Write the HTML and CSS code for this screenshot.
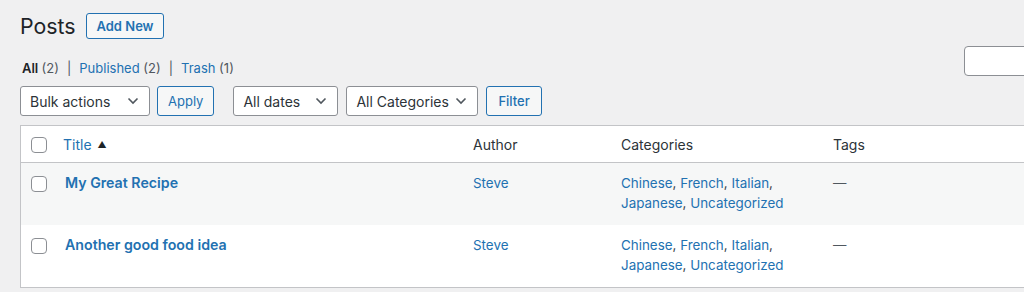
FILE: index.html
```html
<!DOCTYPE html>
<html lang="en">
<head>
    <meta charset="UTF-8">
    <title>Posts</title>
    <link rel="stylesheet" href="styles.css">
</head>
<body>
    <div class="wrap">
        <div class="page-head">
            <h1>Posts</h1>
            <a class="btn add-new" href="#">Add New</a>
        </div>

        <div class="status-row">
            <ul class="subsubsub">
                <li><a class="current" href="#">All <span class="count">(2)</span></a><span class="sep">|</span></li>
                <li><a href="#">Published <span class="count">(2)</span></a><span class="sep">|</span></li>
                <li><a href="#">Trash <span class="count">(1)</span></a></li>
            </ul>
            <div class="search-box"></div>
        </div>

        <div class="tablenav">
            <div class="select bulk">
                <span>Bulk actions</span>
                <svg width="12" height="8" viewBox="0 0 12 8"><path d="M1.5 1.5 6 6l4.5-4.5" fill="none" stroke="#50575e" stroke-width="1.6"/></svg>
            </div>
            <a class="btn" href="#">Apply</a>
            <div class="select dates">
                <span>All dates</span>
                <svg width="12" height="8" viewBox="0 0 12 8"><path d="M1.5 1.5 6 6l4.5-4.5" fill="none" stroke="#50575e" stroke-width="1.6"/></svg>
            </div>
            <div class="select cats">
                <span>All Categories</span>
                <svg width="12" height="8" viewBox="0 0 12 8"><path d="M1.5 1.5 6 6l4.5-4.5" fill="none" stroke="#50575e" stroke-width="1.6"/></svg>
            </div>
            <a class="btn filter" href="#">Filter</a>
        </div>

        <table class="posts">
            <thead>
                <tr>
                    <th class="check"><span class="checkbox"></span></th>
                    <th class="col-title"><a href="#">Title</a> <span class="sort">&#9650;</span></th>
                    <th class="col-author">Author</th>
                    <th class="col-cats">Categories</th>
                    <th class="col-tags">Tags</th>
                    <th class="col-rest"></th>
                </tr>
            </thead>
            <tbody>
                <tr class="alt">
                    <td class="check"><span class="checkbox"></span></td>
                    <td class="col-title"><a class="row-title" href="#">My Great Recipe</a></td>
                    <td><a href="#">Steve</a></td>
                    <td><a href="#">Chinese</a>, <a href="#">French</a>, <a href="#">Italian</a>,<br><a href="#">Japanese</a>, <a href="#">Uncategorized</a></td>
                    <td class="dash">&mdash;</td>
                    <td></td>
                </tr>
                <tr>
                    <td class="check"><span class="checkbox"></span></td>
                    <td class="col-title"><a class="row-title" href="#">Another good food idea</a></td>
                    <td><a href="#">Steve</a></td>
                    <td><a href="#">Chinese</a>, <a href="#">French</a>, <a href="#">Italian</a>,<br><a href="#">Japanese</a>, <a href="#">Uncategorized</a></td>
                    <td class="dash">&mdash;</td>
                    <td></td>
                </tr>
            </tbody>
        </table>
    </div>
</body>
</html>
```

FILE: styles.css
```css
body {
    margin: 0;
    background-color: #f0f0f1;
    color: #3c434a;
    font-family: Inter, 'Liberation Sans', sans-serif;
    font-size: 13px;
    overflow: hidden;
}
a {
    color: #2271b1;
    text-decoration: none;
}
.wrap {
    width: 1124px;
    padding-left: 20px;
}
.page-head {
    display: flex;
    align-items: center;
    gap: 10px;
    height: 26px;
    margin-top: 13px;
}
h1 {
    margin: 0;
    font-size: 21.3px;
    font-weight: 400;
    color: #1d2327;
}
.btn {
    display: inline-flex;
    align-items: center;
    box-sizing: border-box;
    height: 30px;
    padding: 0 10px;
    border: 1px solid #2271b1;
    border-radius: 3px;
    background-color: #f6f7f7;
    color: #2271b1;
    font-size: 13px;
}
.add-new {
    height: 26px;
    padding: 0 9px 0 10px;
    font-weight: 600;
}
.filter {
    padding: 0 11px;
    font-weight: 500;
}
.status-row {
    display: flex;
    justify-content: space-between;
    align-items: flex-start;
    margin-top: 7px;
}
.subsubsub {
    display: flex;
    list-style: none;
    margin: 13px 0 0 2px;
    padding: 0;
    line-height: 18px;
    color: #50575e;
}
.subsubsub .current {
    color: #1d2327;
    font-weight: 600;
}
.sep {
    padding: 0 8px;
    color: #50575e;
}
.count {
    color: #50575e;
    font-weight: 400;
}
.search-box {
    width: 180px;
    height: 30px;
    box-sizing: border-box;
    border: 1px solid #8c8f94;
    border-radius: 4px;
    background-color: #fff;
}
.tablenav {
    display: flex;
    align-items: center;
    height: 30px;
    margin-top: 9px;
}
.select {
    display: flex;
    align-items: center;
    justify-content: space-between;
    box-sizing: border-box;
    height: 30px;
    padding: 0 10px 0 9px;
    border: 1px solid #8c8f94;
    border-radius: 3px;
    background-color: #fff;
    color: #2c3338;
    font-size: 14px;
}
.bulk {
    width: 130px;
    margin-right: 7px;
}
.dates {
    width: 105px;
    margin-left: 19px;
    margin-right: 8px;
}
.cats {
    width: 132px;
    margin-right: 8px;
}
.posts {
    width: 100%;
    margin-top: 9px;
    border: 1px solid #c3c4c7;
    border-collapse: collapse;
    background-color: #fff;
}
.posts th {
    height: 36px;
    padding: 0 10px;
    text-align: left;
    font-weight: 400;
    color: #2c3338;
    border-bottom: 1px solid #c3c4c7;
    font-size: 14px;
}
.posts td {
    height: 40px;
    padding: 10px 10px 12px;
    vertical-align: top;
    line-height: 20px;
    font-size: 13.4px;
}
.posts tr.alt td {
    background-color: #f6f7f7;
}
.posts .check {
    width: 24px;
    padding: 0 0 0 10px;
}
.posts td.check {
    padding-top: 13px;
}
.checkbox {
    display: block;
    width: 16px;
    height: 16px;
    box-sizing: border-box;
    border: 1px solid #8c8f94;
    border-radius: 4px;
    background-color: #fff;
}
th.check .checkbox {
    margin-top: 2px;
}
.posts .col-title {
    width: 388px;
    padding-left: 8px;
}
.posts td.col-title {
    padding-left: 10px;
}
.sort {
    font-size: 9px;
    color: #1d2327;
    margin-left: 2px;
    vertical-align: 2px;
}
.row-title {
    font-weight: 600;
    font-size: 14.2px;
}
.col-author {
    width: 128px;
}
.col-cats {
    width: 192px;
}
.col-tags {
    width: 120px;
}
.dash {
    color: #50575e;
}
```
